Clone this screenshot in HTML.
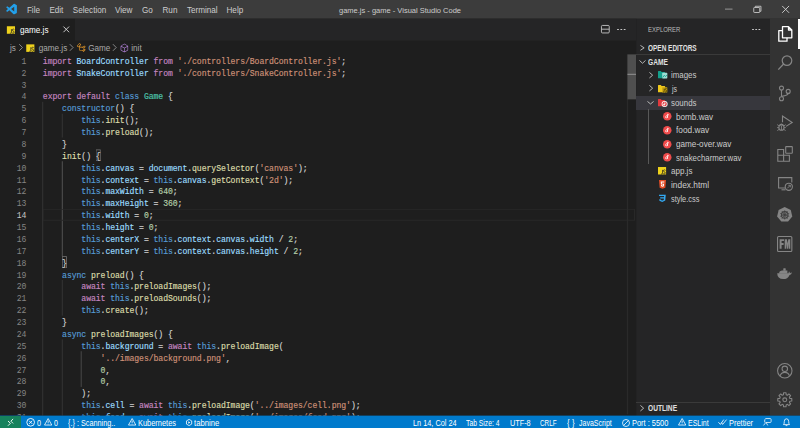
<!DOCTYPE html>
<html><head><meta charset="utf-8">
<style>
html,body{margin:0;padding:0;width:800px;height:428px;overflow:hidden;background:#1e1e1e;}
#root{position:absolute;left:0;top:0;width:1280px;height:685px;transform:scale(0.625);transform-origin:0 0;overflow:hidden;font-family:"Liberation Sans",sans-serif;}
.abs{position:absolute;}
svg{position:absolute;overflow:visible;}
#title{position:absolute;left:0;top:0;width:1280px;height:30px;background:#3c3c3c;color:#cccccc;font-size:13px;}
#title .mi{position:absolute;top:1.5px;height:30px;line-height:30px;}
#title .tt{position:absolute;top:1px;height:30px;line-height:30px;left:0;width:1280px;text-align:center;font-size:12px;color:#cccccc;}
#editor{position:absolute;left:0;top:30px;width:1018px;height:634.8px;background:#1e1e1e;overflow:hidden;}
#tabs{position:absolute;left:0;top:0;width:1018px;height:35px;background:#252526;}
#tab{position:absolute;left:0;top:0;width:120px;height:35px;background:#1e1e1e;color:#ffffff;font-size:13px;}
#bc{position:absolute;left:0;top:35px;width:1018px;height:22px;color:#a9a9a9;font-size:13px;}
#code{position:absolute;left:0;top:57px;width:1018px;height:577.8px;overflow:hidden;}
.ln{position:absolute;left:68.5px;-webkit-text-stroke:0.25px currentColor;margin-top:1.7px;height:19px;line-height:19px;white-space:pre;font-family:"Liberation Mono",monospace;font-size:13px;letter-spacing:-0.1px;color:#d4d4d4;}
.num{position:absolute;left:0;margin-top:1.7px;width:42.2px;text-align:right;height:19px;line-height:19px;font-family:"Liberation Mono",monospace;font-size:13px;letter-spacing:-0.1px;color:#858585;}
.num.cur{color:#c6c6c6;}
.k{color:#c586c0}.b{color:#569cd6}.v{color:#9cdcfe}.t{color:#4ec9b0}.f{color:#dcdcaa}.s{color:#ce9178}.n{color:#b5cea8}
.m{}
.mb{position:absolute;width:7.7px;height:19px;box-shadow:inset 0 0 0 1.2px #777777;}
.guide{position:absolute;width:1.6px;background:#404040;}
.guide.act{background:#707070;}
#side{position:absolute;left:1018px;top:30px;width:214px;height:634.8px;background:#252526;color:#cccccc;font-size:13px;overflow:hidden;}
#act{position:absolute;left:1232px;top:30px;width:48px;height:634.8px;background:#333333;}
#status{position:absolute;left:0;top:664.8px;width:1280px;height:22px;background:#007acc;color:#ffffff;font-size:12px;}
.si{position:absolute;top:0;height:22px;line-height:22px;white-space:nowrap;}
.row{position:absolute;left:0;width:214px;height:22px;line-height:22px;white-space:nowrap;}
.txt{position:absolute;top:0;height:22px;line-height:22px;white-space:nowrap;}
.hdr{font-weight:bold;font-size:11px;color:#cccccc;}
#ov{position:absolute;left:0;top:0;width:800px;height:428px;overflow:hidden;font-family:"Liberation Sans",sans-serif;pointer-events:none}
#ov .o{position:absolute}
#ov .ot{position:absolute;white-space:nowrap;line-height:13.75px}
</style></head><body><div id="root">
<div id="title">
 <svg style="left:10px;top:6px" width="17" height="17" viewBox="0 0 100 100"><path fill="#23a0ea" d="M96.5 10.8 75.9 1a6.2 6.2 0 0 0-7.1 1.2L29.4 38.1 12.2 25.1a4.1 4.1 0 0 0-5.3.2L1.4 30.3a4.1 4.1 0 0 0 0 6.1L16.3 50 1.4 63.6a4.1 4.1 0 0 0 0 6.1l5.5 5a4.1 4.1 0 0 0 5.3.2l17.2-13L68.8 97.8A6.2 6.2 0 0 0 75.9 99l20.6-9.9a6.2 6.2 0 0 0 3.5-5.6V16.4a6.2 6.2 0 0 0-3.5-5.6zM75 72.7 45.1 50 75 27.3z"/></svg>
 <div class="mi" style="left:43px">File</div>
 <div class="mi" style="left:79px">Edit</div>
 <div class="mi" style="left:116.5px">Selection</div>
 <div class="mi" style="left:184px">View</div>
 <div class="mi" style="left:227px">Go</div>
 <div class="mi" style="left:260px">Run</div>
 <div class="mi" style="left:299px">Terminal</div>
 <div class="mi" style="left:362.4px">Help</div>
 <div class="tt">game.js - game - Visual Studio Code</div>
 <!-- window controls -->
 <div class="abs" style="left:1160px;top:14.2px;width:12px;height:1.3px;background:#cccccc"></div>
 <svg style="left:1205px;top:9px" width="14" height="12" viewBox="0 0 14 12"><path d="M3.5 2.5 V1 H12.5 V9 H11" fill="none" stroke="#cccccc" stroke-width="1.4"/><rect x="1" y="3" width="9.5" height="8" fill="none" stroke="#cccccc" stroke-width="1.4" rx="1"/></svg>
 <svg style="left:1251px;top:9px" width="12" height="12" viewBox="0 0 12 12"><path d="M0.5 0.5 L11.5 11.5 M11.5 0.5 L0.5 11.5" stroke="#cccccc" stroke-width="1.5"/></svg>
</div>
<div id="editor">
 <div id="tabs">
  <div id="tab">
   <svg style="left:11.0px;top:11.5px" width="13.0" height="12.0" viewBox="0 0 13 12"><rect width="13" height="12" fill="#efd21c"/><path d="M7.3 4.6 V9.9 Q7.3 11.1 6.1 11.1 H4.9 M12 5.3 Q11.3 4.6 10.2 4.6 Q8.7 4.6 8.7 6.1 Q8.7 7.3 10.1 7.7 Q11.7 8.1 11.7 9.5 Q11.7 11.1 10.1 11.1 Q9 11.1 8.4 10.4" fill="none" stroke="#2b2b22" stroke-width="1.25"/></svg>
   <div class="abs" style="left:32px;top:1px;height:35px;line-height:35px;">game.js</div>
   <svg style="left:100.5px;top:12px" width="10" height="10" viewBox="0 0 10 10"><path d="M0.5 0.5 L9.5 9.5 M9.5 0.5 L0.5 9.5" stroke="#e0e0e0" stroke-width="1.4"/></svg>
  </div>
  <!-- split & more -->
 </div>
 <div id="bc">
  <div class="abs" style="left:16px;top:1.6px;line-height:22px;">js</div>
  <svg style="left:30.0px;top:4.8px" width="7" height="12" viewBox="0 0 7 12"><path d="M0.7 0.7 L5.9 6 L0.7 11.3" fill="none" stroke="#a9a9a9" stroke-width="1.2"/></svg>
  <svg style="left:41.5px;top:5.5px" width="13.0" height="12.0" viewBox="0 0 13 12"><rect width="13" height="12" fill="#efd21c"/><path d="M7.3 4.6 V9.9 Q7.3 11.1 6.1 11.1 H4.9 M12 5.3 Q11.3 4.6 10.2 4.6 Q8.7 4.6 8.7 6.1 Q8.7 7.3 10.1 7.7 Q11.7 8.1 11.7 9.5 Q11.7 11.1 10.1 11.1 Q9 11.1 8.4 10.4" fill="none" stroke="#2b2b22" stroke-width="1.25"/></svg>
  <div class="abs" style="left:62px;top:1.6px;line-height:22px;">game.js</div>
  <svg style="left:111.0px;top:4.8px" width="7" height="12" viewBox="0 0 7 12"><path d="M0.7 0.7 L5.9 6 L0.7 11.3" fill="none" stroke="#a9a9a9" stroke-width="1.2"/></svg>
  <svg style="left:122px;top:3px" width="16" height="16" viewBox="0 0 16 16"><path fill="#ee9d28" d="M11.34 9.71h.71l2.67-2.67v-.71L13.38 5h-.7l-1.82 1.81h-5V5.56l1.86-1.85V3l-2-2H5L1 5v.71l2 2h.71l1.14-1.15v5.79l.5.5H10v.52l1.33 1.34h.71l2.67-2.67v-.71L13.37 10h-.7l-1.86 1.85h-5v-4H10v.48l1.34 1.38zm1.69-3.65.63.63-2 2-.63-.63 2-2zM3.35 6.65 2.06 5.36l3.29-3.29 1.29 1.29-3.29 3.29zm9.68 4.41.63.63-2 2-.63-.63 2-2z"/></svg>
  <div class="abs" style="left:141px;top:1.6px;line-height:22px;">Game</div>
  <svg style="left:180.0px;top:4.8px" width="7" height="12" viewBox="0 0 7 12"><path d="M0.7 0.7 L5.9 6 L0.7 11.3" fill="none" stroke="#a9a9a9" stroke-width="1.2"/></svg>
  <svg style="left:191px;top:3.5px" width="16" height="16" viewBox="0 0 16 16"><path fill="#b180d7" d="M13.51 4l-5-3h-1l-5 3-.49.86v6l.49.85 5 3h1l5-3 .49-.85v-6L13.51 4zm-6 9.56l-4.5-2.7V5.7l4.5 2.45v5.41zM3.27 4.7l4.74-2.84 4.74 2.84-4.74 2.59L3.27 4.7zm9.74 6.16l-4.5 2.7V8.15l4.5-2.45v5.16z"/></svg>
  <div class="abs" style="left:210px;top:1.6px;line-height:22px;">init</div>
 </div>
 <div id="code">
<div class="guide" style="left:67.7px;top:76px;height:513px"></div>
<div class="guide" style="left:98.5px;top:95px;height:38px"></div>
<div class="guide act" style="left:98.5px;top:171px;height:152px"></div>
<div class="guide" style="left:98.5px;top:361px;height:57px"></div>
<div class="guide" style="left:98.5px;top:456px;height:133px"></div>
<div class="guide" style="left:129.3px;top:475px;height:57px"></div>
  <div class="mb" style="left:153.2px;top:151.7px"></div>
  <div class="mb" style="left:99.3px;top:322.7px"></div>
  <div class="abs" style="left:68px;top:247px;width:948px;height:19px;box-shadow:inset 0 0 0 1.6px #282828;"></div>
<div class="num" style="top:0px">1</div>
<div class="num" style="top:19px">2</div>
<div class="num" style="top:38px">3</div>
<div class="num" style="top:57px">4</div>
<div class="num" style="top:76px">5</div>
<div class="num" style="top:95px">6</div>
<div class="num" style="top:114px">7</div>
<div class="num" style="top:133px">8</div>
<div class="num" style="top:152px">9</div>
<div class="num" style="top:171px">10</div>
<div class="num" style="top:190px">11</div>
<div class="num" style="top:209px">12</div>
<div class="num" style="top:228px">13</div>
<div class="num cur" style="top:247px">14</div>
<div class="num" style="top:266px">15</div>
<div class="num" style="top:285px">16</div>
<div class="num" style="top:304px">17</div>
<div class="num" style="top:323px">18</div>
<div class="num" style="top:342px">19</div>
<div class="num" style="top:361px">20</div>
<div class="num" style="top:380px">21</div>
<div class="num" style="top:399px">22</div>
<div class="num" style="top:418px">23</div>
<div class="num" style="top:437px">24</div>
<div class="num" style="top:456px">25</div>
<div class="num" style="top:475px">26</div>
<div class="num" style="top:494px">27</div>
<div class="num" style="top:513px">28</div>
<div class="num" style="top:532px">29</div>
<div class="num" style="top:551px">30</div>
<div class="num" style="top:570px">31</div>
<div class="ln" style="top:0px"><span class="k">import</span> <span class="v">BoardController</span> <span class="k">from</span> <span class="s">&#x27;./controllers/BoardController.js&#x27;</span>;</div>
<div class="ln" style="top:19px"><span class="k">import</span> <span class="v">SnakeController</span> <span class="k">from</span> <span class="s">&#x27;./controllers/SnakeController.js&#x27;</span>;</div>
<div class="ln" style="top:38px"></div>
<div class="ln" style="top:57px"><span class="k">export</span> <span class="k">default</span> <span class="b">class</span> <span class="t">Game</span> {</div>
<div class="ln" style="top:76px">    <span class="b">constructor</span>() {</div>
<div class="ln" style="top:95px">        <span class="b">this</span>.<span class="f">init</span>();</div>
<div class="ln" style="top:114px">        <span class="b">this</span>.<span class="f">preload</span>();</div>
<div class="ln" style="top:133px">    }</div>
<div class="ln" style="top:152px">    <span class="f">init</span>() <span class="m">{</span></div>
<div class="ln" style="top:171px">        <span class="b">this</span>.<span class="v">canvas</span> = <span class="v">document</span>.<span class="f">querySelector</span>(<span class="s">&#x27;canvas&#x27;</span>);</div>
<div class="ln" style="top:190px">        <span class="b">this</span>.<span class="v">context</span> = <span class="b">this</span>.<span class="v">canvas</span>.<span class="f">getContext</span>(<span class="s">&#x27;2d&#x27;</span>);</div>
<div class="ln" style="top:209px">        <span class="b">this</span>.<span class="v">maxWidth</span> = <span class="n">640</span>;</div>
<div class="ln" style="top:228px">        <span class="b">this</span>.<span class="v">maxHeight</span> = <span class="n">360</span>;</div>
<div class="ln" style="top:247px">        <span class="b">this</span>.<span class="v">width</span> = <span class="n">0</span>;</div>
<div class="ln" style="top:266px">        <span class="b">this</span>.<span class="v">height</span> = <span class="n">0</span>;</div>
<div class="ln" style="top:285px">        <span class="b">this</span>.<span class="v">centerX</span> = <span class="b">this</span>.<span class="v">context</span>.<span class="v">canvas</span>.<span class="v">width</span> / <span class="n">2</span>;</div>
<div class="ln" style="top:304px">        <span class="b">this</span>.<span class="v">centerY</span> = <span class="b">this</span>.<span class="v">context</span>.<span class="v">canvas</span>.<span class="v">height</span> / <span class="n">2</span>;</div>
<div class="ln" style="top:323px">    <span class="m">}</span></div>
<div class="ln" style="top:342px">    <span class="b">async</span> <span class="f">preload</span>() {</div>
<div class="ln" style="top:361px">        <span class="k">await</span> <span class="b">this</span>.<span class="f">preloadImages</span>();</div>
<div class="ln" style="top:380px">        <span class="k">await</span> <span class="b">this</span>.<span class="f">preloadSounds</span>();</div>
<div class="ln" style="top:399px">        <span class="b">this</span>.<span class="f">create</span>();</div>
<div class="ln" style="top:418px">    }</div>
<div class="ln" style="top:437px">    <span class="b">async</span> <span class="f">preloadImages</span>() {</div>
<div class="ln" style="top:456px">        <span class="b">this</span>.<span class="v">background</span> = <span class="k">await</span> <span class="b">this</span>.<span class="f">preloadImage</span>(</div>
<div class="ln" style="top:475px">            <span class="s">&#x27;../images/background.png&#x27;</span>,</div>
<div class="ln" style="top:494px">            <span class="n">0</span>,</div>
<div class="ln" style="top:513px">            <span class="n">0</span>,</div>
<div class="ln" style="top:532px">        );</div>
<div class="ln" style="top:551px">        <span class="b">this</span>.<span class="v">cell</span> = <span class="k">await</span> <span class="b">this</span>.<span class="f">preloadImage</span>(<span class="s">&#x27;../images/cell.png&#x27;</span>);</div>
<div class="ln" style="top:570px">        <span class="b">this</span>.<span class="v">food</span> = <span class="k">await</span> <span class="b">this</span>.<span class="f">preloadImage</span>(<span class="s">&#x27;../images/food.png&#x27;</span>);</div>
 </div>
 <!-- scrollbar -->
 <div class="abs" style="left:1003px;top:57px;width:1.6px;height:576px;background:#2a2a2a"></div>
 <div class="abs" style="left:1003.5px;top:57px;width:14.5px;height:72px;background:#4f4f4f"></div>
 <div class="abs" style="left:1003.5px;top:87.5px;width:14.5px;height:2px;background:#858585"></div>
</div>
<div id="side">
 
</div>
<div id="act">
 
</div>
<div id="status">
 
</div>
</div><div id="ov">
<div class="o" style="left:636px;top:95.6px;width:134px;height:14px;background:#37373d"></div>
<div class="o" style="left:636px;top:54px;width:134px;height:0.7px;background:#3a3a3a"></div>
<div class="o" style="left:636px;top:401.8px;width:134px;height:0.7px;background:#3a3a3a"></div>
<svg style="left:639.60px;top:44.90px" width="4.60" height="5.70" viewBox="0 0 4.60 5.70"><path d="M0.45 0.45 L4.15 2.85 L0.45 5.25" fill="none" stroke="#c5c5c5" stroke-width="0.90"/></svg>
<svg style="left:638.50px;top:60.00px" width="7.00" height="3.70" viewBox="0 0 7.00 3.70"><path d="M0.45 0.45 L3.50 3.25 L6.55 0.45" fill="none" stroke="#c5c5c5" stroke-width="0.90"/></svg>
<svg style="left:648.80px;top:71.60px" width="4.10" height="6.40" viewBox="0 0 4.10 6.40"><path d="M0.45 0.45 L3.65 3.20 L0.45 5.95" fill="none" stroke="#c5c5c5" stroke-width="0.90"/></svg>
<svg style="left:648.80px;top:85.40px" width="4.10" height="6.40" viewBox="0 0 4.10 6.40"><path d="M0.45 0.45 L3.65 3.20 L0.45 5.95" fill="none" stroke="#c5c5c5" stroke-width="0.90"/></svg>
<svg style="left:646.60px;top:100.90px" width="7.10" height="3.40" viewBox="0 0 7.10 3.40"><path d="M0.45 0.45 L3.55 2.95 L6.65 0.45" fill="none" stroke="#c5c5c5" stroke-width="0.90"/></svg>
<svg style="left:640.40px;top:405.00px" width="4.10" height="6.40" viewBox="0 0 4.10 6.40"><path d="M0.45 0.45 L3.65 3.20 L0.45 5.95" fill="none" stroke="#c5c5c5" stroke-width="0.90"/></svg>
<div class="o" style="left:752px;top:28.7px;width:1.5px;height:1.5px;border-radius:1px;background:#c8c8c8;box-shadow:3.2px 0 0 #c8c8c8,6.4px 0 0 #c8c8c8"></div>
<svg style="left:657.80px;top:71.40px" width="10" height="8" viewBox="0 0 10 8"><path d="M0 0.5 Q0 0 0.5 0 H2.8 L3.6 0.9 H6.6 Q7.1 0.9 7.1 1.4 V6.9 Q7.1 7.3 6.6 7.3 H0.5 Q0 7.3 0 6.9z" fill="#14a08c"/><rect x="4.2" y="1.8" width="5.1" height="5.6" rx="0.6" fill="#9fded4"/><path d="M4.8 6.4 L6.3 4.3 L7.5 5.6 L8.9 3.9" stroke="#14a08c" stroke-width="0.9" fill="none"/></svg>
<svg style="left:657.80px;top:85.20px" width="10" height="8" viewBox="0 0 10 8"><path d="M0 0.5 Q0 0 0.5 0 H2.8 L3.6 0.9 H6.6 Q7.1 0.9 7.1 1.4 V6.9 Q7.1 7.3 6.6 7.3 H0.5 Q0 7.3 0 6.9z" fill="#efc81c"/><rect x="4.2" y="2.2" width="5.1" height="5.3" rx="0.5" fill="#c9a312"/><path d="M6.2 3.6 V6.3 Q6.2 6.9 5.6 6.9 H5.1 M8.9 4 Q8.5 3.6 7.9 3.6 Q7.1 3.6 7.1 4.4 Q7.1 5 7.9 5.2 Q8.7 5.4 8.7 6.1 Q8.7 6.9 7.9 6.9 Q7.3 6.9 7 6.5" stroke="#3b3000" stroke-width="0.7" fill="none"/></svg>
<svg style="left:657.80px;top:98.60px" width="10" height="8" viewBox="0 0 10 8"><path d="M0 0.5 Q0 0 0.5 0 H2.8 L3.6 0.9 H6.6 Q7.1 0.9 7.1 1.4 V6.9 Q7.1 7.3 6.6 7.3 H0.5 Q0 7.3 0 6.9z" fill="#e0393e"/><circle cx="6.6" cy="5" r="3" fill="#ffffff"/><circle cx="6.6" cy="5" r="2.2" fill="#e0393e"/><path d="M6 6.3 a0.7 0.7 0 1 1 0.01 0 M6.7 6.1 V3.6 L7.6 4.2" stroke="#fff" stroke-width="0.7" fill="none"/></svg>
<svg style="left:662.90px;top:112.00px" width="8.5" height="8.5" viewBox="0 0 10 10"><circle cx="5" cy="5" r="5" fill="#ef4b4b"/><path d="M4.2 6.8 a1.1 1.1 0 1 1 0.01 0 M5.3 6.6 V2.6 L7 3.6" stroke="#fff" stroke-width="0.9" fill="none"/></svg>
<svg style="left:662.90px;top:125.75px" width="8.5" height="8.5" viewBox="0 0 10 10"><circle cx="5" cy="5" r="5" fill="#ef4b4b"/><path d="M4.2 6.8 a1.1 1.1 0 1 1 0.01 0 M5.3 6.6 V2.6 L7 3.6" stroke="#fff" stroke-width="0.9" fill="none"/></svg>
<svg style="left:662.90px;top:139.50px" width="8.5" height="8.5" viewBox="0 0 10 10"><circle cx="5" cy="5" r="5" fill="#ef4b4b"/><path d="M4.2 6.8 a1.1 1.1 0 1 1 0.01 0 M5.3 6.6 V2.6 L7 3.6" stroke="#fff" stroke-width="0.9" fill="none"/></svg>
<svg style="left:662.90px;top:153.25px" width="8.5" height="8.5" viewBox="0 0 10 10"><circle cx="5" cy="5" r="5" fill="#ef4b4b"/><path d="M4.2 6.8 a1.1 1.1 0 1 1 0.01 0 M5.3 6.6 V2.6 L7 3.6" stroke="#fff" stroke-width="0.9" fill="none"/></svg>
<div class="o" style="left:648.3px;top:109.4px;width:0.7px;height:55px;background:#585858"></div>
<svg style="left:657.9px;top:167.3px" width="8.1" height="7.5" viewBox="0 0 13 12"><rect width="13" height="12" fill="#efd21c"/><path d="M7.3 4.6 V9.9 Q7.3 11.1 6.1 11.1 H4.9 M12 5.3 Q11.3 4.6 10.2 4.6 Q8.7 4.6 8.7 6.1 Q8.7 7.3 10.1 7.7 Q11.7 8.1 11.7 9.5 Q11.7 11.1 10.1 11.1 Q9 11.1 8.4 10.4" fill="none" stroke="#2b2b22" stroke-width="1.25"/></svg>
<svg style="left:658.5px;top:180px" width="7" height="9" viewBox="0 0 14 18"><path d="M0 0 H14 L12.7 15.5 L7 17.5 L1.3 15.5z" fill="#e44d26"/><path d="M3.5 3 H10.6 L10.4 5 H5.6 L5.8 7.3 H10.2 L9.7 12.5 L7 13.4 L4.3 12.5 L4.1 10.2 H6 L6.1 11.1 L7 11.4 L7.9 11.1 L8.1 9.1 H4 z" fill="#fff"/></svg>
<svg style="left:658.2px;top:193.7px" width="8.5" height="8.5" viewBox="0 0 17 17"><path d="M2 1.5 H15.5 L14.5 13 L8.5 16 L2.8 13.5 L2.5 10.5 H5.3 L5.5 11.8 L8.5 13 L11.5 11.8 L11.8 8.8 H4.5 L4.3 6.3 H12 L12.2 4 H2.2z" fill="#33a9f2"/></svg>
<svg style="left:601px;top:24.7px" width="8.7" height="8.4" viewBox="0 0 8.7 8.4"><rect x="0.45" y="0.45" width="7.8" height="7.5" rx="1" fill="none" stroke="#c5c5c5" stroke-width="0.9"/><path d="M0.5 4.2 H8.2" stroke="#c5c5c5" stroke-width="0.9"/></svg>
<div class="o" style="left:617.2px;top:28.5px;width:1.5px;height:1.5px;border-radius:1px;background:#c8c8c8;box-shadow:3.3px 0 0 #c8c8c8,6.6px 0 0 #c8c8c8"></div>
<div class="o" style="left:797.5px;top:18.75px;width:2.5px;height:30px;background:#ffffff"></div>
<svg style="left:777.5px;top:25.5px" width="15" height="16" viewBox="0 0 15 16"><path d="M4.5 0.7 H10.5 L13.8 4 V11.8 H4.5z M10.5 0.7 V4 H13.8" fill="none" stroke="#ffffff" stroke-width="1.3" stroke-linejoin="round"/><path d="M4.5 4.6 H0.8 V15.2 H9 V11.8" fill="none" stroke="#ffffff" stroke-width="1.3" stroke-linejoin="round"/></svg>
<svg style="left:777px;top:54px" width="16" height="17" viewBox="0 0 16 17"><circle cx="10" cy="6.6" r="4.8" fill="none" stroke="#858585" stroke-width="1.2"/><path d="M6.6 10 L1.3 15.6" stroke="#858585" stroke-width="1.3"/></svg>
<svg style="left:777px;top:84px" width="16" height="17" viewBox="0 0 16 17"><circle cx="4.5" cy="4.1" r="2" fill="none" stroke="#858585" stroke-width="1.1"/><circle cx="11.2" cy="7.4" r="2" fill="none" stroke="#858585" stroke-width="1.1"/><circle cx="4.5" cy="14.8" r="2" fill="none" stroke="#858585" stroke-width="1.1"/><path d="M4.5 6.1 V12.8 M11.2 9.4 Q11 11.4 4.8 12.4" fill="none" stroke="#858585" stroke-width="1.1"/></svg>
<svg style="left:777px;top:115px" width="17" height="17" viewBox="0 0 17 17"><path d="M5.5 7.3 V1.1 L15.2 7.5 L9 11.4" fill="none" stroke="#858585" stroke-width="1.1"/><ellipse cx="4.45" cy="12.5" rx="2.6" ry="2.8" fill="none" stroke="#858585" stroke-width="1.1"/><path d="M2.6 10.4 Q4.45 7.8 6.3 10.4" fill="none" stroke="#858585" stroke-width="1.1"/><path d="M0.2 9.6 L1.9 10.8 M8.7 9.6 L7 10.8 M0.1 12.6 H1.8 M8.8 12.6 H7.1 M0.3 15.6 L2 14.4 M8.6 15.6 L6.9 14.4 M4.45 10.5 V15" stroke="#858585" stroke-width="0.9"/></svg>
<svg style="left:777px;top:145.5px" width="16" height="16" viewBox="0 0 16 16"><path d="M0.8 3.5 H6.6 V9.3 H12.4 V15.2 H0.8z M0.8 9.3 H6.6 V15.2" fill="none" stroke="#858585" stroke-width="1.1"/><rect x="8.7" y="0.6" width="6.6" height="6.6" rx="0.5" fill="none" stroke="#858585" stroke-width="1.1"/></svg>
<svg style="left:777.5px;top:177px" width="16" height="14" viewBox="0 0 16 14"><path d="M7 11 H0.6 V0.6 H13.8 V5.5" fill="none" stroke="#858585" stroke-width="1.1"/><path d="M3.5 12.8 H7.5" stroke="#858585" stroke-width="1.1"/><circle cx="10.8" cy="9.8" r="3.6" fill="none" stroke="#858585" stroke-width="1.1"/><path d="M9.3 11.3 L12.3 8.3 M10.3 8.3 H12.3 V10.3" fill="none" stroke="#858585" stroke-width="0.9"/></svg>
<svg style="left:777.3px;top:206.5px" width="15.4" height="14.5" viewBox="0 0 16 15"><path d="M8 0 L14.3 3 L15.9 9.8 L11.5 15 H4.5 L0.1 9.8 L1.7 3z" fill="#858585"/><circle cx="8" cy="8.2" r="3.4" fill="none" stroke="#404040" stroke-width="1.1"/><circle cx="8" cy="8.2" r="1" fill="#404040"/><path d="M8 3.4 V13 M3.3 6.7 L12.7 9.7 M12.7 6.7 L3.3 9.7 M5.1 12.2 L10.9 4.2 M10.9 12.2 L5.1 4.2" stroke="#404040" stroke-width="0.8"/></svg>
<svg style="left:777.3px;top:235.7px" width="15.4" height="16" viewBox="0 0 15.4 16"><rect x="0.55" y="0.55" width="14.3" height="14.9" rx="1" fill="none" stroke="#858585" stroke-width="1.1"/><path d="M2.6 3.2 H7 V5.1 H4.6 V7.1 H6.6 V8.9 H4.6 V12.8 H2.6z M7.7 3.2 H9.9 L10.6 7.6 L11.3 3.2 H13.3 V12.8 H11.8 V7.2 L11.1 12.8 H10.1 L9.3 7.2 V12.8 H7.7z" fill="#858585"/></svg>
<svg style="left:777.3px;top:266.5px" width="16" height="13" viewBox="0 0 16 13"><path d="M0.2 6.3 Q0.4 12.1 6.2 12.1 Q10.8 12.1 12.4 8.2 Q14.4 7.6 15 5.6 Q13.7 5.9 13 6.2 Q12.7 5.1 12 4.3 Q11.6 5.6 11.5 6.3 z" fill="#858585"/><path d="M1.8 6.4 Q2.4 3.6 5 3.5 H10.4 V6.4z" fill="#858585"/><rect x="6.3" y="1.2" width="2.4" height="2.6" rx="0.6" fill="#858585"/></svg>
<svg style="left:777.3px;top:363px" width="15.6" height="15.6" viewBox="0 0 16 16"><circle cx="8" cy="8" r="7.4" fill="none" stroke="#858585" stroke-width="1.1"/><circle cx="8" cy="6" r="2.8" fill="none" stroke="#858585" stroke-width="1.1"/><path d="M3.2 13.3 Q4.2 9.6 8 9.6 Q11.8 9.6 12.8 13.3" fill="none" stroke="#858585" stroke-width="1.1"/></svg>
<svg style="left:777.3px;top:392.3px" width="15.6" height="15.6" viewBox="0 0 16 16"><path d="M6.60 2.78 L6.73 0.81 L9.27 0.81 L9.40 2.78 L10.70 3.32 L12.19 2.02 L13.98 3.81 L12.68 5.30 L13.22 6.60 L15.19 6.73 L15.19 9.27 L13.22 9.40 L12.68 10.70 L13.98 12.19 L12.19 13.98 L10.70 12.68 L9.40 13.22 L9.27 15.19 L6.73 15.19 L6.60 13.22 L5.30 12.68 L3.81 13.98 L2.02 12.19 L3.32 10.70 L2.78 9.40 L0.81 9.27 L0.81 6.73 L2.78 6.60 L3.32 5.30 L2.02 3.81 L3.81 2.02 L5.30 3.32 z" fill="none" stroke="#858585" stroke-width="1.1" stroke-linejoin="round"/><circle cx="8" cy="8" r="2" fill="none" stroke="#858585" stroke-width="1.1"/></svg>
<div class="o" style="left:0;top:415.50px;width:20.9px;height:13.75px;background:#16825d"></div>
<svg style="left:0px;top:0px" width="20" height="428" viewBox="0 0 20 428"><path d="M8 421 L10.4 423.3 L8 425.7 M13.1 418.9 L10.9 421.2 L13.1 423.4" stroke="#fff" stroke-width="0.9" fill="none"/></svg>
<svg style="left:0px;top:0px" width="60" height="428" viewBox="0 0 60 428"><circle cx="30.65" cy="422.3" r="3.85" fill="none" stroke="#fff" stroke-width="0.9"/><path d="M29.1 420.75 L32.2 423.85 M32.2 420.75 L29.1 423.85" stroke="#fff" stroke-width="0.9"/></svg>
<svg style="left:43.50px;top:418.4px" width="8.3" height="7.6" viewBox="0 0 8.4 7.6"><path d="M4.2 0.5 L7.9 7.1 H0.5z" fill="none" stroke="#fff" stroke-width="0.8" stroke-linejoin="round"/><path d="M4.2 2.6 V5 M4.2 5.7 V6.4" stroke="#fff" stroke-width="0.8"/></svg>
<svg style="left:127.50px;top:418.4px" width="8.3" height="7.6" viewBox="0 0 8.4 7.6"><path d="M4.2 0.5 L7.9 7.1 H0.5z" fill="none" stroke="#fff" stroke-width="0.8" stroke-linejoin="round"/><path d="M4.2 2.6 V5 M4.2 5.7 V6.4" stroke="#fff" stroke-width="0.8"/></svg>
<svg style="left:185.7px;top:418.7px" width="6.2" height="7" viewBox="0 0 6 7"><path d="M3 0.4 L5.6 1.9 V5.1 L3 6.6 L0.4 5.1 V1.9z" fill="none" stroke="#fff" stroke-width="0.8"/><path d="M2.2 2.3 L4.2 3.5 L2.2 4.7z" fill="#fff"/></svg>
<svg style="left:621.6px;top:418.5px" width="8" height="8" viewBox="0 0 8 8"><circle cx="4" cy="4" r="3.5" fill="none" stroke="#fff" stroke-width="0.8"/><path d="M1.6 6.4 L6.4 1.6" stroke="#fff" stroke-width="0.8"/></svg>
<svg style="left:678.00px;top:418.4px" width="8.3" height="7.6" viewBox="0 0 8.4 7.6"><path d="M4.2 0.5 L7.9 7.1 H0.5z" fill="none" stroke="#fff" stroke-width="0.8" stroke-linejoin="round"/><path d="M4.2 2.6 V5 M4.2 5.7 V6.4" stroke="#fff" stroke-width="0.8"/></svg>
<svg style="left:717.5px;top:419.4px" width="9" height="6" viewBox="0 0 9 6"><path d="M0.4 3.2 L2.4 5.4 L5.8 0.6 M3.6 3.6 L4.6 5.4 L8.6 0.6" stroke="#fff" stroke-width="0.8" fill="none"/></svg>
<svg style="left:763.2px;top:418.3px" width="8.6" height="8" viewBox="0 0 9 8"><path d="M0.5 7.6 L3 4.5 H7.5 Q8.5 4.5 8.5 3.5 V1.4 Q8.5 0.4 7.5 0.4 H3 L1.8 1.5 V4.5 M3.2 4.5 L5 7.6" stroke="#fff" stroke-width="0.8" fill="none"/></svg>
<svg style="left:782.7px;top:418.1px" width="7" height="8.5" viewBox="0 0 7 8.5"><path d="M0.5 6.6 Q1.3 5.8 1.3 3.5 Q1.3 0.8 3.5 0.8 Q5.7 0.8 5.7 3.5 Q5.7 5.8 6.5 6.6z M2.6 7.6 H4.4" stroke="#fff" stroke-width="0.8" fill="none" stroke-linejoin="round"/></svg>
<div class="ot" style="left:648.00px;top:22.20px;font-size:7.500px;line-height:15.000px;font-weight:normal;color:#bbbbbb;transform:scaleX(0.7927);transform-origin:0 0">EXPLORER</div>
<div class="ot" style="left:648.30px;top:40.90px;font-size:8.200px;line-height:16.400px;font-weight:bold;color:#e0e0e0;transform:scaleX(0.7887);transform-origin:0 0">OPEN EDITORS</div>
<div class="ot" style="left:648.20px;top:54.50px;font-size:8.200px;line-height:16.400px;font-weight:bold;color:#e0e0e0;transform:scaleX(0.8080);transform-origin:0 0">GAME</div>
<div class="ot" style="left:648.40px;top:401.40px;font-size:8.200px;line-height:16.400px;font-weight:bold;color:#e0e0e0;transform:scaleX(0.8083);transform-origin:0 0">OUTLINE</div>
<div class="ot" style="left:670.85px;top:68.20px;font-size:8.200px;line-height:16.400px;font-weight:normal;color:#cccccc;transform:scaleX(0.9648);transform-origin:0 0">images</div>
<div class="ot" style="left:671.70px;top:81.95px;font-size:8.200px;line-height:16.400px;font-weight:normal;color:#cccccc;transform:scaleX(0.8500);transform-origin:0 0">js</div>
<div class="ot" style="left:670.85px;top:95.70px;font-size:8.200px;line-height:16.400px;font-weight:normal;color:#cccccc;transform:scaleX(0.9648);transform-origin:0 0">sounds</div>
<div class="ot" style="left:675.80px;top:109.55px;font-size:8.200px;line-height:16.400px;font-weight:normal;color:#cccccc;transform:scaleX(0.9947);transform-origin:0 0">bomb.wav</div>
<div class="ot" style="left:675.80px;top:123.30px;font-size:8.200px;line-height:16.400px;font-weight:normal;color:#cccccc;transform:scaleX(1.0121);transform-origin:0 0">food.wav</div>
<div class="ot" style="left:675.80px;top:137.05px;font-size:8.200px;line-height:16.400px;font-weight:normal;color:#cccccc;transform:scaleX(0.9964);transform-origin:0 0">game-over.wav</div>
<div class="ot" style="left:675.80px;top:150.80px;font-size:8.200px;line-height:16.400px;font-weight:normal;color:#cccccc;transform:scaleX(0.9594);transform-origin:0 0">snakecharmer.wav</div>
<div class="ot" style="left:670.85px;top:164.45px;font-size:8.200px;line-height:16.400px;font-weight:normal;color:#cccccc;transform:scaleX(0.9795);transform-origin:0 0">app.js</div>
<div class="ot" style="left:670.85px;top:178.20px;font-size:8.200px;line-height:16.400px;font-weight:normal;color:#cccccc;transform:scaleX(1.0230);transform-origin:0 0">index.html</div>
<div class="ot" style="left:670.85px;top:191.95px;font-size:8.200px;line-height:16.400px;font-weight:normal;color:#cccccc;transform:scaleX(0.9047);transform-origin:0 0">style.css</div>
<div class="ot" style="left:37.20px;top:415.90px;font-size:8.200px;line-height:16.400px;font-weight:normal;color:#ffffff;transform:scaleX(0.8800);transform-origin:0 0">0</div>
<div class="ot" style="left:54.00px;top:415.90px;font-size:8.200px;line-height:16.400px;font-weight:normal;color:#ffffff;transform:scaleX(0.8600);transform-origin:0 0">0</div>
<div class="ot" style="left:68.20px;top:415.90px;font-size:8.200px;line-height:16.400px;font-weight:normal;color:#ffffff;transform:scaleX(0.8887);transform-origin:0 0">{.} : Scanning..</div>
<div class="ot" style="left:137.70px;top:415.90px;font-size:8.200px;line-height:16.400px;font-weight:normal;color:#ffffff;transform:scaleX(0.9071);transform-origin:0 0">Kubernetes</div>
<div class="ot" style="left:194.00px;top:415.90px;font-size:8.200px;line-height:16.400px;font-weight:normal;color:#ffffff;transform:scaleX(0.9370);transform-origin:0 0">tabnine</div>
<div class="ot" style="left:412.80px;top:415.90px;font-size:8.200px;line-height:16.400px;font-weight:normal;color:#ffffff;transform:scaleX(0.8939);transform-origin:0 0">Ln 14, Col 24</div>
<div class="ot" style="left:466.30px;top:415.90px;font-size:8.200px;line-height:16.400px;font-weight:normal;color:#ffffff;transform:scaleX(0.8293);transform-origin:0 0">Tab Size: 4</div>
<div class="ot" style="left:509.80px;top:415.90px;font-size:8.200px;line-height:16.400px;font-weight:normal;color:#ffffff;transform:scaleX(0.8913);transform-origin:0 0">UTF-8</div>
<div class="ot" style="left:539.50px;top:415.90px;font-size:8.200px;line-height:16.400px;font-weight:normal;color:#ffffff;transform:scaleX(0.7773);transform-origin:0 0">CRLF</div>
<div class="ot" style="left:566.60px;top:415.90px;font-size:8.200px;line-height:16.400px;font-weight:normal;color:#ffffff;transform:scaleX(0.9750);transform-origin:0 0">{ }</div>
<div class="ot" style="left:578.50px;top:415.90px;font-size:8.200px;line-height:16.400px;font-weight:normal;color:#ffffff;transform:scaleX(0.8564);transform-origin:0 0">JavaScript</div>
<div class="ot" style="left:631.90px;top:415.90px;font-size:8.200px;line-height:16.400px;font-weight:normal;color:#ffffff;transform:scaleX(0.9075);transform-origin:0 0">Port : 5500</div>
<div class="ot" style="left:688.20px;top:415.90px;font-size:8.200px;line-height:16.400px;font-weight:normal;color:#ffffff;transform:scaleX(0.8583);transform-origin:0 0">ESLint</div>
<div class="ot" style="left:728.70px;top:415.90px;font-size:8.200px;line-height:16.400px;font-weight:normal;color:#ffffff;transform:scaleX(0.9111);transform-origin:0 0">Prettier</div>
</div></body></html>
